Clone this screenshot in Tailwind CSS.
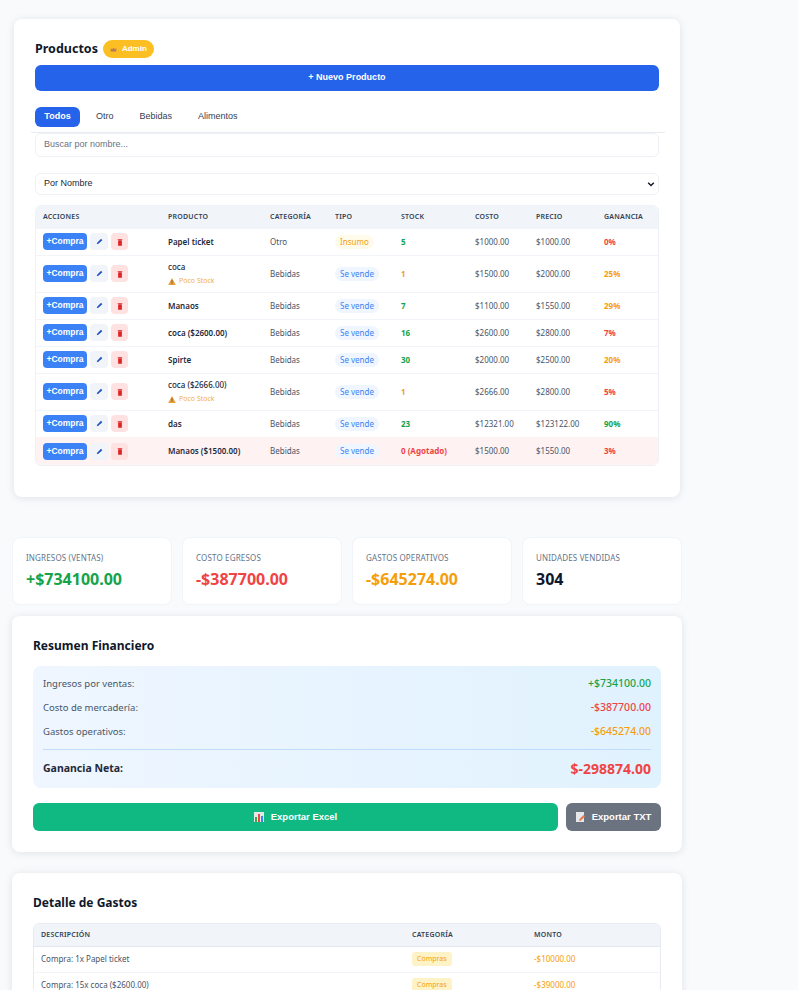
<!DOCTYPE html>
<html lang="es">
<head>
  <meta charset="UTF-8" />
  <title>Productos</title>
  <script src="https://cdn.jsdelivr.net/npm/@tailwindcss/browser@4"></script>
</head>
<body class="bg-white m-0 p-0 overflow-hidden font-['Noto_Sans',sans-serif]">
  <div class="h-[990px] overflow-hidden bg-[#f8fafc] w-[798px] pt-[19px]">

    <!-- Productos -->
    <section class="ml-[14px] w-[666px] h-[478px] bg-white rounded-lg shadow-[0_1px_8px_rgba(15,23,42,0.10)] px-[21px] pt-[20px]">
      <div class="flex items-center gap-[5px] h-[20px]">
        <h2 class="text-[12.5px] font-bold text-[#0f172a]">Productos</h2>
        <span class="h-[18px] w-[51px] rounded-full bg-[#fbbf24] flex items-center justify-center gap-[5px] text-white text-[8px] font-bold font-['Liberation_Sans',sans-serif]">
          <svg width="7" height="7" viewBox="0 0 10 10"><path d="M1 3l2 2 2-3 2 3 2-2v5H1z" fill="#b7795a"/></svg>Admin
        </span>
      </div>
      <button class="mt-[6px] w-full h-[26px] rounded-md bg-[#2563eb] text-white text-[9px] font-bold font-['Liberation_Sans',sans-serif]">+ Nuevo Producto</button>

      <div class="mt-[16px] flex items-center gap-[1px] font-['Liberation_Sans',sans-serif] text-[9px] text-[#334155]">
        <span class="h-[20px] w-[45px] rounded-md bg-[#2563eb] text-white font-bold flex items-center justify-center">Todos</span>
        <span class="px-[15px]">Otro</span>
        <span class="px-[10px]">Bebidas</span>
        <span class="px-[15px]">Alimentos</span>
      </div>
      <div class="mt-[5px] -mx-[4px] w-[634px] h-px bg-[#e8ebf0]"></div>
      <div class="h-[24px] rounded-md border border-[#eef1f5] flex items-center pl-[8px] text-[9px] text-[#6b7280] font-['Liberation_Sans',sans-serif]">Buscar por nombre...</div>
      <div class="mt-[16px] h-[22px] rounded-md border border-[#eef1f5] flex items-center justify-between pl-[8px] pr-[3px] text-[9px] text-[#1f2937] font-['Liberation_Sans',sans-serif]">
        Por Nombre
        <svg width="8" height="8" viewBox="0 0 10 10" fill="none" stroke="#111827" stroke-width="1.8"><path d="M1.5 3.5 5 7l3.5-3.5"/></svg>
      </div>

      <div class="mt-[10px] rounded-md border border-[#eef1f5] overflow-hidden">
        <table class="w-full table-fixed border-collapse text-[8px] text-[#475569]">
          <colgroup>
            <col class="w-[125px]" /><col class="w-[102px]" /><col class="w-[65px]" /><col class="w-[66px]" />
            <col class="w-[74px]" /><col class="w-[61px]" /><col class="w-[68px]" /><col />
          </colgroup>
          <thead>
            <tr class="h-[22px] bg-[#f1f5f9] text-[7px] font-semibold uppercase tracking-[0.03em] text-[#334155] text-left">
              <th class="pl-[7px] font-semibold">Acciones</th>
              <th class="pl-[7px] font-semibold">Producto</th>
              <th class="pl-[7px] font-semibold">Categoría</th>
              <th class="pl-[7px] font-semibold">Tipo</th>
              <th class="pl-[7px] font-semibold">Stock</th>
              <th class="pl-[7px] font-semibold">Costo</th>
              <th class="pl-[7px] font-semibold">Precio</th>
              <th class="pl-[7px] font-semibold">Ganancia</th>
            </tr>
          </thead>
          <tbody id="rows"></tbody>
        </table>
      </div>
    </section>

    <!-- Estadisticas -->
    <div class="mt-[40px] ml-[12px] w-[670px] grid grid-cols-4 gap-[10px]">
      <div class="h-[68px] bg-white rounded-lg border border-[#f1f5f9] pl-[13px] pt-[14px]">
        <p class="text-[8px] uppercase tracking-[0.02em] text-[#64748b]">Ingresos (Ventas)</p>
        <p class="mt-[3px] text-[16px] font-bold text-[#16a34a]">+$734100.00</p>
      </div>
      <div class="h-[68px] bg-white rounded-lg border border-[#f1f5f9] pl-[13px] pt-[14px]">
        <p class="text-[8px] uppercase tracking-[0.02em] text-[#64748b]">Costo Egresos</p>
        <p class="mt-[3px] text-[16px] font-bold text-[#ef4444]">-$387700.00</p>
      </div>
      <div class="h-[68px] bg-white rounded-lg border border-[#f1f5f9] pl-[13px] pt-[14px]">
        <p class="text-[8px] uppercase tracking-[0.02em] text-[#64748b]">Gastos Operativos</p>
        <p class="mt-[3px] text-[16px] font-bold text-[#f59e0b]">-$645274.00</p>
      </div>
      <div class="h-[68px] bg-white rounded-lg border border-[#f1f5f9] pl-[13px] pt-[14px]">
        <p class="text-[8px] uppercase tracking-[0.02em] text-[#64748b]">Unidades Vendidas</p>
        <p class="mt-[3px] text-[16px] font-bold text-[#0f172a]">304</p>
      </div>
    </div>

    <!-- Resumen -->
    <section class="mt-[11px] ml-[12px] w-[670px] h-[236px] bg-white rounded-lg shadow-[0_1px_8px_rgba(15,23,42,0.10)] px-[21px] pt-[21px]">
      <h2 class="text-[12px] font-bold text-[#0f172a] leading-[18px]">Resumen Financiero</h2>
      <div class="mt-[11px] h-[122px] rounded-lg bg-gradient-to-r from-[#eff6ff] to-[#e0f2fe] px-[10px] pt-[6px] text-[9.5px] text-[#475569]">
        <div class="flex justify-between items-center h-[24px]"><span>Ingresos por ventas:</span><span class="text-[10.5px] font-medium text-[#16a34a]">+$734100.00</span></div>
        <div class="flex justify-between items-center h-[24px]"><span>Costo de mercadería:</span><span class="text-[10.5px] font-medium text-[#ef4444]">-$387700.00</span></div>
        <div class="flex justify-between items-center h-[24px]"><span>Gastos operativos:</span><span class="text-[10.5px] font-medium text-[#f59e0b]">-$645274.00</span></div>
        <div class="flex justify-between items-center h-[38px] mt-[5px] border-t border-[#bfdbfe]">
          <span class="text-[10.5px] font-bold text-[#1e293b]">Ganancia Neta:</span>
          <span class="text-[14px] font-bold text-[#ef4444]">$-298874.00</span>
        </div>
      </div>
      <div class="mt-[15px] flex gap-[8px] text-[9.5px] font-bold text-white font-['Liberation_Sans',sans-serif]">
        <button class="flex-1 h-[28px] rounded-md bg-[#10b981] flex items-center justify-center gap-[7px]">
          <svg width="10" height="10" viewBox="0 0 10 10"><rect width="10" height="10" fill="#e5e7eb"/><rect x="1" y="5" width="2" height="5" fill="#34a853"/><rect x="4" y="2" width="2" height="8" fill="#ef4444"/><rect x="7" y="4" width="2" height="6" fill="#3b82f6"/></svg>
          Exportar Excel
        </button>
        <button class="w-[95px] h-[28px] rounded-md bg-[#6b7280] flex items-center justify-center gap-[7px]">
          <svg width="9" height="10" viewBox="0 0 9 10"><rect width="8" height="10" fill="#e5e7eb"/><path d="M3 9l.6-2L7.5 3 9 4.5 5 8.500z" fill="#ea7a4b"/></svg>
          Exportar TXT
        </button>
      </div>
    </section>

    <!-- Detalle de gastos -->
    <section class="mt-[21px] ml-[12px] w-[670px] h-[160px] bg-white rounded-lg shadow-[0_1px_8px_rgba(15,23,42,0.10)] px-[21px] pt-[21px]">
      <h2 class="text-[12px] font-bold text-[#0f172a] leading-[18px]">Detalle de Gastos</h2>
      <div class="mt-[11px] rounded-md border border-[#e8ecf2] overflow-hidden">
        <table class="w-full table-fixed border-collapse text-[8px] text-[#475569]">
          <colgroup><col class="w-[371px]" /><col class="w-[122px]" /><col /></colgroup>
          <thead>
            <tr class="h-[22px] bg-[#f1f5f9] text-[7px] uppercase tracking-[0.03em] text-[#334155] text-left border-b border-[#e2e8f0]">
              <th class="pl-[7px] font-semibold">Descripción</th>
              <th class="pl-[7px] font-semibold">Categoría</th>
              <th class="pl-[7px] font-semibold">Monto</th>
            </tr>
          </thead>
          <tbody>
            <tr class="h-[26px] border-b border-[#f1f5f9]">
              <td class="pl-[7px]">Compra: 1x Papel ticket</td>
              <td class="pl-[7px]"><span class="inline-block px-[5px] py-[2px] rounded-[3px] bg-[#fef3c7] text-[#f59e0b] text-[7px]">Compras</span></td>
              <td class="pl-[7px] text-[#f59e0b]">-$10000.00</td>
            </tr>
            <tr class="h-[26px]">
              <td class="pl-[7px]">Compra: 15x coca ($2600.00)</td>
              <td class="pl-[7px]"><span class="inline-block px-[5px] py-[2px] rounded-[3px] bg-[#fef3c7] text-[#f59e0b] text-[7px]">Compras</span></td>
              <td class="pl-[7px] text-[#f59e0b]">-$39000.00</td>
            </tr>
          </tbody>
        </table>
      </div>
    </section>
  </div>

  <script>
    // filas de la tabla de productos
    const productos = [
      { n: 'Papel ticket', bold: true, cat: 'Otro', tipo: 'Insumo', s: '5', sc: 'text-[#16a34a]', c: '$1000.00', p: '$1000.00', g: '0%', gc: 'text-[#ef4444]' },
      { n: 'coca', low: true, cat: 'Bebidas', tipo: 'Se vende', s: '1', sc: 'text-[#f59e0b]', c: '$1500.00', p: '$2000.00', g: '25%', gc: 'text-[#f59e0b]' },
      { n: 'Manaos', bold: true, cat: 'Bebidas', tipo: 'Se vende', s: '7', sc: 'text-[#16a34a]', c: '$1100.00', p: '$1550.00', g: '29%', gc: 'text-[#f59e0b]' },
      { n: 'coca ($2600.00)', bold: true, cat: 'Bebidas', tipo: 'Se vende', s: '16', sc: 'text-[#16a34a]', c: '$2600.00', p: '$2800.00', g: '7%', gc: 'text-[#ef4444]' },
      { n: 'Spirte', bold: true, cat: 'Bebidas', tipo: 'Se vende', s: '30', sc: 'text-[#16a34a]', c: '$2000.00', p: '$2500.00', g: '20%', gc: 'text-[#f59e0b]' },
      { n: 'coca ($2666.00)', low: true, cat: 'Bebidas', tipo: 'Se vende', s: '1', sc: 'text-[#f59e0b]', c: '$2666.00', p: '$2800.00', g: '5%', gc: 'text-[#ef4444]' },
      { n: 'das', bold: true, cat: 'Bebidas', tipo: 'Se vende', s: '23', sc: 'text-[#16a34a]', c: '$12321.00', p: '$123122.00', g: '90%', gc: 'text-[#16a34a]' },
      { n: 'Manaos ($1500.00)', bold: true, out: true, cat: 'Bebidas', tipo: 'Se vende', s: '0 (Agotado)', sc: 'text-[#ef4444]', c: '$1500.00', p: '$1550.00', g: '3%', gc: 'text-[#ef4444]' }
    ];

    const pencil = '<svg width="7" height="7" viewBox="0 0 10 10"><path d="M1 7.500 2.500 9 9 3.200 7.200 1.200z" fill="#1e4fc2"/></svg>';
    const trash = '<svg width="6" height="8" viewBox="0 0 8 10"><path d="M1 1h6v1H1zM1.500 2.500h5V10h-5z" fill="#dc2626"/></svg>';
    const warn = '<svg width="8" height="7" viewBox="0 0 10 9"><path d="M5 0l5 9H0z" fill="#e8a13a"/><path d="M4.500 3h1v3h-1zM4.500 6.800h1v1h-1z" fill="#5b4632"/></svg>';

    document.getElementById('rows').innerHTML = productos.map((r) => {
      const tipoCls = r.tipo === 'Insumo' ? 'bg-[#fffbeb] text-[#f59e0b]' : 'bg-[#eff6ff] text-[#3b82f6]';
      const rowCls = r.out ? 'h-[28px] bg-[#fef2f2]' : (r.low ? 'h-[37px] border-t border-[#f1f5f9]' : 'h-[27px] border-t border-[#f1f5f9]');
      return `<tr class="${rowCls}">
        <td class="pl-[7px]"><div class="flex items-center gap-[3px]">
          <span class="w-[44px] h-[17px] rounded-[4px] bg-[#3b82f6] text-white text-[8.500px] font-bold flex items-center justify-center font-['Liberation_Sans',sans-serif]">+Compra</span>
          <span class="w-[18px] h-[17px] rounded-[4px] bg-[#f1f5f9] flex items-center justify-center">${pencil}</span>
          <span class="w-[17px] h-[17px] rounded-[4px] bg-[#fee2e2] flex items-center justify-center">${trash}</span>
        </div></td>
        <td class="pl-[7px] font-semibold text-[#1e293b]">${r.low ? `<div class="font-medium">${r.n}</div><div class="mt-[3px] flex items-center gap-[3px] text-[7px] font-normal text-[#f5b041]">${warn}Poco Stock</div>` : r.n}</td>
        <td class="pl-[7px]">${r.cat}</td>
        <td class="pl-[7px]"><span class="inline-block px-[5px] py-[1px] rounded-full text-[8px] ${tipoCls}">${r.tipo}</span></td>
        <td class="pl-[7px] font-bold ${r.sc}">${r.s}</td>
        <td class="pl-[7px]">${r.c}</td>
        <td class="pl-[7px]">${r.p}</td>
        <td class="pl-[7px] font-bold ${r.gc}">${r.g}</td>
      </tr>`;
    }).join('');
  </script>
</body>
</html>
